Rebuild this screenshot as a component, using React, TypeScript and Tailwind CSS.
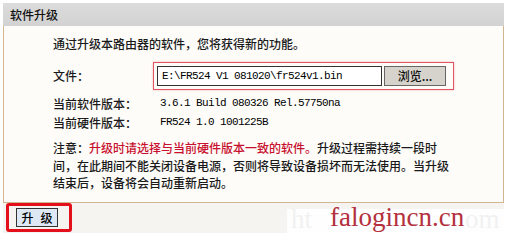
export default function App() {
  const cjk = { fontFamily: '"Noto Sans CJK SC", "Liberation Sans", sans-serif' }
  const mono = { fontFamily: '"Liberation Mono", "Noto Sans CJK SC", monospace' }
  const serif = { fontFamily: '"Liberation Serif", serif' }

  return (
    <div
      className="relative h-[233px] w-[508px] overflow-hidden bg-white text-[12px] font-medium text-[#1a1a1a]"
      style={cjk}
    >
      <div className="ml-[3px] mt-[3px] w-[501px]">
        <div className="flex h-[23px] items-center bg-gradient-to-b from-[#dcdcdc] to-[#d2d2d2] pl-[7px] text-[12px] text-[#111]">
          软件升级
        </div>

        <div className="h-[177px] border-x border-b border-[#d3b68f] bg-[#fdfcf9] pl-[49px] pt-[9px]">
          <div className="leading-[18px]">
            通过升级本路由器的软件，您将获得新的功能。
          </div>

          <div className="mt-[9px] flex h-[28px] items-center">
            <div className="w-[100px]">文件：</div>
            <div className="flex h-[28px] items-center gap-[2px] border border-[#e05560] pl-[3px] pr-[7px] shadow-[0_0_2px_#f3b0b6]">
              <div
                className="flex h-[20px] w-[225px] items-center border border-[#333] bg-white pl-[4px] text-[11px] font-normal tracking-[-0.6px] text-black"
                style={mono}
              >
                E:\FR524 V1 081020\fr524v1.bin
              </div>
              <div className="flex h-[20px] w-[62px] items-center justify-center border border-[#666] bg-[#d6d3cc] text-[12px] text-[#111]">
                浏览...
              </div>
            </div>
          </div>

          <div className="mt-[4px] flex h-[19px] items-center">
            <div className="w-[107px]">当前软件版本：</div>
            <div className="text-[11px] font-normal tracking-[-0.6px] text-black" style={mono}>
              3.6.1 Build 080326 Rel.57750na
            </div>
          </div>
          <div className="flex h-[19px] items-center">
            <div className="w-[107px]">当前硬件版本：</div>
            <div className="text-[11px] font-normal tracking-[-0.6px] text-black" style={mono}>
              FR524 1.0 1001225B
            </div>
          </div>

          <div className="mt-[7px] leading-[17.5px]">
            注意：<span className="text-[#c8102e]">升级时请选择与当前硬件版本一致的软件。</span>升级过程需持续一段时
            <br />
            间，在此期间不能关闭设备电源，否则将导致设备损坏而无法使用。当升级
            <br />
            结束后，设备将会自动重新启动。
          </div>
        </div>

        <div className="flex h-[30px] items-start bg-[#f6f4f0] pl-[3px]">
          <div className="flex h-[29px] w-[66px] items-center rounded-[3px] border-[3px] border-[#e3101c] pl-[7px]">
            <div className="flex h-[19px] w-[42px] items-center justify-center gap-[7px] border border-[#333] bg-[#dde8f4] text-[12px] text-black">
              <span>升</span>
              <span>级</span>
            </div>
          </div>
        </div>
      </div>

      <div className="absolute left-[287px] top-[209px] h-[24px] w-[218px] bg-white/90">
        <div className="absolute left-[4px] top-[-8px] text-[27px] font-normal leading-[36px] text-[#f1f1f1]" style={serif}>
          ht
        </div>
        <div className="absolute left-[178px] top-[-8px] text-[27px] font-normal leading-[36px] text-[#f1f1f1]" style={serif}>
          om
        </div>
        <div
          className="absolute left-[43px] top-[-10px] text-[27px] font-normal leading-[36px] text-[#b3303c]"
          style={serif}
        >
          falogincn.cn
        </div>
      </div>
    </div>
  )
}
